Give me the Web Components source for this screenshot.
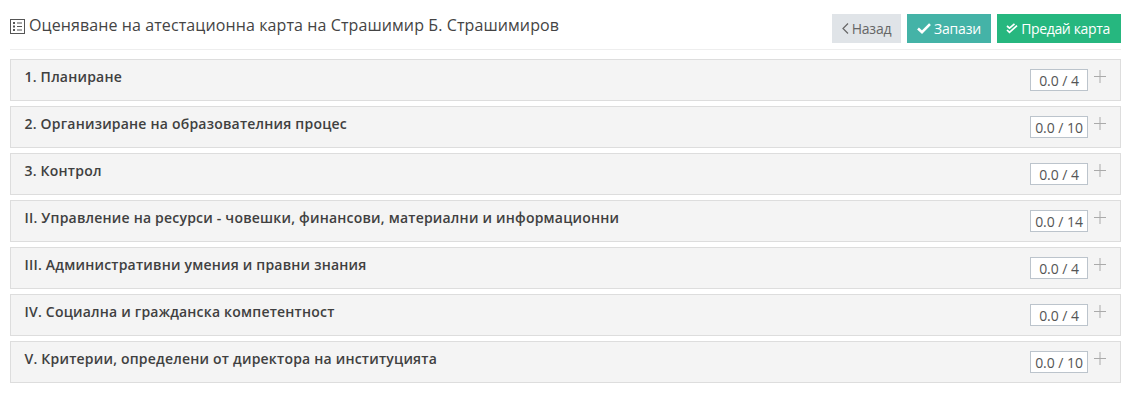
<!DOCTYPE html>
<html>
<head>
<meta charset="utf-8">
<style>
  html, body { margin: 0; background: #fff; }
  body { font-family: "Open Sans", sans-serif; color: #333; padding: 0 10px; }
</style>
</head>
<body>
<card-page>
  <page-header heading="Оценяване на атестационна карта на Страшимир Б. Страшимиров"></page-header>
  <score-row label="1. Планиране" score="0.0 / 4"></score-row>
  <score-row label="2. Организиране на образователния процес" score="0.0 / 10"></score-row>
  <score-row label="3. Контрол" score="0.0 / 4"></score-row>
  <score-row label="II. Управление на ресурси - човешки, финансови, материални и информационни" score="0.0 / 14"></score-row>
  <score-row label="III. Административни умения и правни знания" score="0.0 / 4"></score-row>
  <score-row label="IV. Социална и гражданска компетентност" score="0.0 / 4"></score-row>
  <score-row label="V. Критерии, определени от директора на институцията" score="0.0 / 10"></score-row>
</card-page>

<script>
class CardPage extends HTMLElement {
  constructor() {
    super();
    this.attachShadow({ mode: 'open' }).innerHTML = `
      <style>
        :host { display: flex; flex-direction: column; gap: 5px; width: 1111px; }
      </style>
      <slot></slot>`;
  }
}

class PageHeader extends HTMLElement {
  constructor() {
    super();
    this.attachShadow({ mode: 'open' }).innerHTML = `
      <style>
        :host { display: flex; justify-content: space-between; height: 49px;
          border-bottom: 1px solid #eee; margin-bottom: 4px; }
        .title { display: flex; align-items: center; gap: 4px; height: 22px; margin-top: 14px;
          font-size: 16px; letter-spacing: 0.1px; color: #444; }
        .title svg { display: block; margin-top: 3px; }
        .buttons { display: flex; gap: 6px; padding-top: 14px; }
        .btn { box-sizing: border-box; height: 29px; display: flex; align-items: center; justify-content: center; gap: 3px;
          font-size: 14px; color: #fff; letter-spacing: -0.2px; }
        .back { background: #e0e4e8; color: #666; width: 69px; }
        .save { background: #44b3a7; width: 84px; }
        .submit { background: #26b77f; width: 124px; padding-right: 2px; letter-spacing: -0.35px; }
      </style>
      <div class="title">
        <svg width="15" height="15" viewBox="0 0 15 15" fill="none" stroke="#555">
          <rect x="0.5" y="0.5" width="14" height="14"/>
          <path d="M7 4h5M7 7.5h5M7 11h5"/>
          <path d="M3 4h2M3 7.5h2M3 11h2" stroke-width="2"/>
        </svg>
        <span>${this.getAttribute('heading')}</span>
      </div>
      <div class="buttons">
        <div class="btn back">
          <svg width="7" height="11" viewBox="0 0 7 11" fill="none" stroke="#666" stroke-width="1.2"><path d="M6 .5 1 5.5l5 5"/></svg>
          <span>Назад</span>
        </div>
        <div class="btn save">
          <svg width="14" height="11" viewBox="0 0 14 11" fill="none" stroke="#fff" stroke-width="2.6"><path d="M1 5.5 5 9.2 13 1.2"/></svg>
          <span>Запази</span>
        </div>
        <div class="btn submit">
          <svg width="12" height="11" viewBox="0 0 12 11" fill="none" stroke="#fff" stroke-width="1.7"><path d="M1 3 3.5 5.2 8.5 .8M1 7 3.5 9.4 11 2.6"/></svg>
          <span>Предай карта</span>
        </div>
      </div>`;
  }
}

class ScoreRow extends HTMLElement {
  constructor() {
    super();
    this.attachShadow({ mode: 'open' }).innerHTML = `
      <style>
        :host { display: flex; justify-content: space-between; box-sizing: border-box; height: 42px;
          background: #f4f4f4; border: 1px solid #ddd; padding: 7px 14px 0 13.5px; }
        .label { font-size: 14px; font-weight: 600; letter-spacing: 0.21px; color: #404040; line-height: 19px; }
        .right { display: flex; align-items: flex-start; gap: 6px; }
        .score { box-sizing: border-box; height: 22px; min-width: 58px; margin-top: 2px; padding: 0 4px; background: #fff;
          border: 1px solid #bcc4cc; font-size: 14px; line-height: 22px; letter-spacing: -0.05px; text-align: center; color: #555; }
        svg { display: block; margin-top: 3px; }
      </style>
      <span class="label">${this.getAttribute('label')}</span>
      <div class="right">
        <span class="score">${this.getAttribute('score')}</span>
        <svg width="12" height="13" viewBox="0 0 12 13" stroke="#aaa"><path d="M6 0v13M0 6.5h12"/></svg>
      </div>`;
  }
}

customElements.define('card-page', CardPage);
customElements.define('page-header', PageHeader);
customElements.define('score-row', ScoreRow);
</script>
</body>
</html>
